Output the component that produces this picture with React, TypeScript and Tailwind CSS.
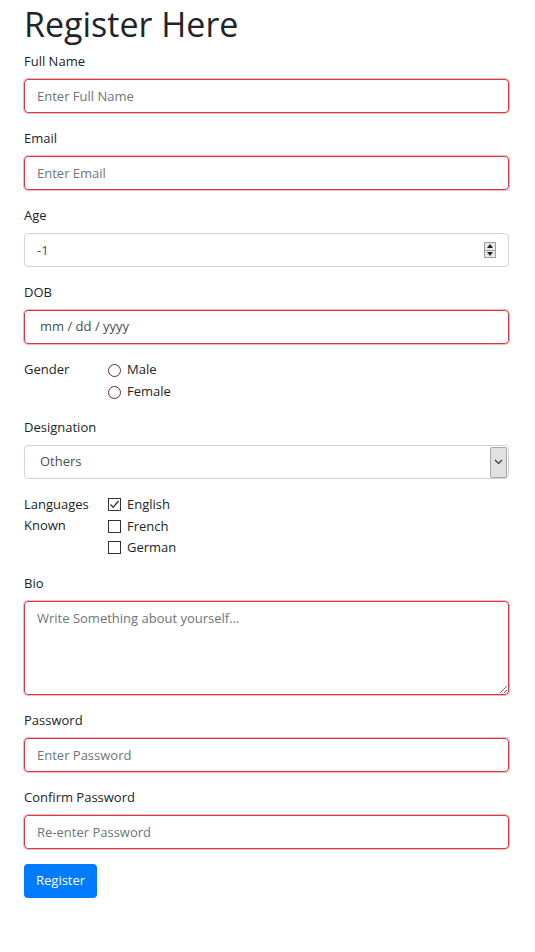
import React from "react";

const font = { fontFamily: '"Open Sans", "Noto Sans", Arial, sans-serif' };

function Label({ children }: { children: React.ReactNode }) {
  return <label className="mb-[7px] block text-[13px] leading-[21px] text-[#212529]">{children}</label>;
}

const invalid =
  "block h-[34px] w-full rounded-[4px] border border-[#dc3545] px-3 text-[13px] text-[#495057] shadow-[0_0_0_1px_rgba(220,53,69,0.35)] outline-none placeholder:text-[#6c757d]";

function TextField({ label, placeholder, type = "text" }: { label: string; placeholder: string; type?: string }) {
  return (
    <div className="mb-[15px]">
      <Label>{label}</Label>
      <input type={type} placeholder={placeholder} className={invalid} />
    </div>
  );
}

function Radio({ label }: { label: string }) {
  return (
    <div className="flex h-[22px] items-center gap-[6px]">
      <span className="h-[13px] w-[13px] rounded-full border border-[#6b2a33] bg-white" />
      <span className="text-[13px] text-[#212529]">{label}</span>
    </div>
  );
}

function Check({ label, checked }: { label: string; checked?: boolean }) {
  return (
    <div className="flex h-[21.5px] items-center gap-[6px]">
      <span className="flex h-[13px] w-[13px] items-center justify-center border border-[#333] bg-white">
        {checked && (
          <svg width="11" height="11" viewBox="0 0 11 11" fill="none">
            <path d="M1.5 5.5 L4.2 8.3 L9.5 2" stroke="#222" strokeWidth="1.2" />
          </svg>
        )}
      </span>
      <span className="text-[13px] text-[#212529]">{label}</span>
    </div>
  );
}

export default function App() {
  return (
    <div className="min-h-screen bg-white pl-6 pr-[26px]" style={font}>
      <h1 className="mb-[3px] text-[34px] leading-[48px] font-normal text-[#212529]">Register Here</h1>

      <TextField label="Full Name" placeholder="Enter Full Name" />
      <TextField label="Email" placeholder="Enter Email" type="email" />

      <div className="mb-[15px]">
        <Label>Age</Label>
        <div className="relative">
          <input
            readOnly
            value="-1"
            className="block h-[34px] w-full rounded-[4px] border border-[#ced4da] px-3 text-[13px] text-[#495057] outline-none"
          />
          <div className="absolute right-[13px] top-[9px] flex h-[16px] w-[12px] flex-col border border-[#a0a0a0] bg-[#e8e8e8]">
            <div className="flex flex-1 items-center justify-center border-b border-[#a0a0a0]">
              <span className="h-0 w-0 border-x-[3px] border-b-[4px] border-x-transparent border-b-[#222]" />
            </div>
            <div className="flex flex-1 items-center justify-center">
              <span className="h-0 w-0 border-x-[3px] border-t-[4px] border-x-transparent border-t-[#222]" />
            </div>
          </div>
        </div>
      </div>

      <div className="mb-[15px]">
        <Label>DOB</Label>
        <div className={invalid + " flex items-center"}>
          <span className="pl-[3px] text-[13px] text-[#495057]">mm / dd / yyyy</span>
        </div>
      </div>

      <div className="mb-[14px] flex">
        <div className="w-[84px] text-[13px] leading-[21px] text-[#212529]">Gender</div>
        <div>
          <Radio label="Male" />
          <Radio label="Female" />
        </div>
      </div>

      <div className="mb-[15px]">
        <Label>Designation</Label>
        <div className="flex h-[34px] w-full items-center rounded-[4px] border border-[#ced4da]">
          <span className="flex-1 pl-[15px] text-[13px] text-[#495057]">Others</span>
          <span className="mr-[1px] flex h-[31px] w-[17px] items-center justify-center rounded-[2px] border border-[#a8a8a8] bg-[#e1e1e1]">
            <svg width="9" height="6" viewBox="0 0 9 6" fill="none">
              <path d="M1 1 L4.5 4.5 L8 1" stroke="#333" strokeWidth="1.1" />
            </svg>
          </span>
        </div>
      </div>

      <div className="mb-[14px] flex">
        <div className="w-[84px] text-[13px] leading-[21px] text-[#212529]">
          Languages
          <br />
          Known
        </div>
        <div>
          <Check label="English" checked />
          <Check label="French" />
          <Check label="German" />
        </div>
      </div>

      <div className="mb-[15px]">
        <Label>Bio</Label>
        <textarea
          placeholder="Write Something about yourself..."
          className="block h-[94px] w-full resize-y rounded-[4px] border border-[#dc3545] px-3 py-[7px] text-[13px] text-[#495057] shadow-[0_0_0_1px_rgba(220,53,69,0.35)] outline-none placeholder:text-[#6c757d]"
        />
      </div>

      <TextField label="Password" placeholder="Enter Password" type="password" />
      <TextField label="Confirm Password" placeholder="Re-enter Password" type="password" />

      <button className="h-[34px] rounded-[4px] bg-[#007bff] px-3 text-[13px] text-white">Register</button>
    </div>
  );
}
